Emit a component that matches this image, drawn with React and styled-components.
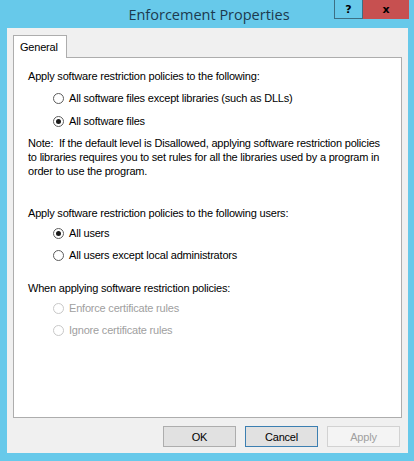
import styled, { createGlobalStyle } from "styled-components";

const Global = createGlobalStyle`
  html, body {
    margin: 0;
    padding: 0;
    background: #67c9ea;
  }
  * { box-sizing: border-box; }
`;

const Frame = styled.div`
  width: 414px;
  height: 461px;
  background: #67c9ea;
  display: flex;
  flex-direction: column;
  font-family: "Liberation Sans", Arial, sans-serif;
`;

const TitleBar = styled.div`
  position: relative;
  height: 28px;
  display: flex;
  align-items: center;
  justify-content: center;
`;

const Title = styled.div`
  font-family: "Open Sans", "Noto Sans", sans-serif;
  font-size: 14.5px;
  color: #1c3a4f;
  padding-left: 4px;
  padding-top: 1px;
`;

const Caption = styled.div`
  position: absolute;
  top: 0;
  right: 5px;
  display: flex;
`;

const CapButton = styled.div`
  height: 19px;
  width: ${({ $w }) => $w}px;
  display: flex;
  align-items: center;
  justify-content: center;
  font-family: "DejaVu Sans", sans-serif;
  font-weight: bold;
  font-size: 11px;
  color: #000;
  background: ${({ $bg }) => $bg};
  border: ${({ $border }) => ($border ? "1px solid #3d6f84" : "none")};
  border-top: none;
`;

const Client = styled.div`
  margin: 0 6px 0 7px;
  height: 425px;
  background: #f0f0f0;
  display: flex;
  flex-direction: column;
  padding: 7px 6px 0 6px;
  letter-spacing: -0.2px;
`;

const TabStrip = styled.div`
  display: flex;
  height: 22px;
`;

const Tab = styled.div`
  width: 54px;
  height: 23px;
  background: #fff;
  border: 1px solid #adadad;
  border-bottom: none;
  font-size: 11px;
  color: #000;
  padding: 5px 0 0 6px;
  position: relative;
  z-index: 1;
`;

const Panel = styled.div`
  height: 361px;
  background: #fff;
  border: 1px solid #adadad;
  padding: 11px 14px 0 14px;
  display: flex;
  flex-direction: column;
`;

const Label = styled.div`
  font-size: 11px;
  line-height: 14px;
  color: #000;
  margin-top: ${({ $mt }) => $mt || 0}px;
`;

const Note = styled.div`
  font-size: 11px;
  line-height: 14px;
  color: #000;
  margin-top: 8px;
  white-space: pre;
`;

const RadioRow = styled.div`
  display: flex;
  align-items: center;
  height: 14px;
  margin-top: ${({ $mt }) => $mt}px;
  padding-left: 25px;
  font-size: 11px;
  color: ${({ $disabled }) => ($disabled ? "#a0a0a0" : "#000")};
`;

const Circle = styled.span`
  width: 11px;
  height: 11px;
  border-radius: 50%;
  border: 1px solid ${({ $disabled }) => ($disabled ? "#c8c8c8" : "#5c5c5c")};
  background: #fff;
  margin-right: 5px;
  display: flex;
  align-items: center;
  justify-content: center;
  &::after {
    content: "";
    width: 5px;
    height: 5px;
    border-radius: 50%;
    background: ${({ $checked }) => ($checked ? "#1a1a1a" : "transparent")};
  }
`;

const ButtonRow = styled.div`
  display: flex;
  justify-content: flex-end;
  gap: 9px;
  padding: 8px 2px 0 0;
`;

const Button = styled.div`
  width: 73px;
  height: 21px;
  display: flex;
  align-items: center;
  justify-content: center;
  font-size: 11px;
  color: ${({ $disabled }) => ($disabled ? "#a0a0a0" : "#000")};
  background: ${({ $disabled }) => ($disabled ? "#f4f4f4" : "#e1e1e1")};
  border: 1px solid
    ${({ $disabled, $focus }) =>
      $disabled ? "#d2d2d2" : $focus ? "#3c7fb1" : "#adadad"};
`;

function Radio({ checked, disabled, mt, children }) {
  return (
    <RadioRow $mt={mt} $disabled={disabled}>
      <Circle $checked={checked} $disabled={disabled} />
      {children}
    </RadioRow>
  );
}

export default function App() {
  return (
    <Frame>
      <Global />
      <TitleBar>
        <Title>Enforcement Properties</Title>
        <Caption>
          <CapButton $w={29} $bg="#67c9ea" $border>
            ?
          </CapButton>
          <CapButton $w={46} $bg="#c75050">
            x
          </CapButton>
        </Caption>
      </TitleBar>
      <Client>
        <TabStrip>
          <Tab>General</Tab>
        </TabStrip>
        <Panel>
          <Label>Apply software restriction policies to the following:</Label>
          <Radio mt={8}>All software files except libraries (such as DLLs)</Radio>
          <Radio mt={9} checked>
            All software files
          </Radio>
          <Note>
            {"Note:  If the default level is Disallowed, applying software restriction policies\nto libraries requires you to set rules for all the libraries used by a program in\norder to use the program."}
          </Note>
          <Label $mt={28}>
            Apply software restriction policies to the following users:
          </Label>
          <Radio mt={6} checked>
            All users
          </Radio>
          <Radio mt={8}>All users except local administrators</Radio>
          <Label $mt={19}>When applying software restriction policies:</Label>
          <Radio mt={6} disabled>
            Enforce certificate rules
          </Radio>
          <Radio mt={8} disabled>
            Ignore certificate rules
          </Radio>
        </Panel>
        <ButtonRow>
          <Button>OK</Button>
          <Button $focus>Cancel</Button>
          <Button $disabled>Apply</Button>
        </ButtonRow>
      </Client>
    </Frame>
  );
}
